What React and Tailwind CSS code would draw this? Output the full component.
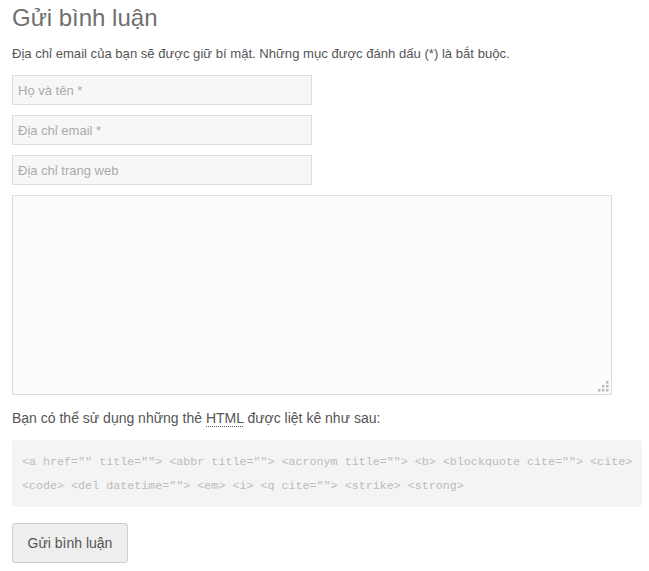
import React from "react";

const inputCls =
  "block w-[300px] h-[30px] border border-[#dddddd] bg-[#f7f7f7] px-[5px] text-[13px] text-[#555] placeholder:text-[#aaa] outline-none";

function ResizeGrip() {
  const dots = [
    [8, 0],
    [4, 4],
    [8, 4],
    [0, 8],
    [4, 8],
    [8, 8],
  ];
  return (
    <svg className="pointer-events-none absolute bottom-[3px] right-[3px]" width="11" height="11" viewBox="0 0 11 11">
      {dots.map(([x, y], i) => (
        <rect key={i} x={x} y={y} width="2.5" height="2.5" fill="#bbb" />
      ))}
    </svg>
  );
}

export default function App() {
  return (
    <div className="min-h-[571px] bg-white px-3 pt-[4px] font-['Liberation_Sans',Arial,sans-serif] text-[#555]">
      <h3 className="text-[24px] leading-[28px] text-[#6f6f6f]">Gửi bình luận</h3>
      <p className="mt-[13px] text-[13.1px] leading-[18px] text-[#555]">
        Địa chỉ email của bạn sẽ được giữ bí mật. Những mục được đánh dấu (*) là bắt buộc.
      </p>

      <form className="mt-[12px]" onSubmit={(e) => e.preventDefault()}>
        <div className="space-y-[10px]">
          <input className={inputCls} placeholder="Họ và tên *" />
          <input className={inputCls} placeholder="Địa chỉ email *" />
          <input className={inputCls} placeholder="Địa chỉ trang web" />
          <div className="relative w-[600px]">
            <textarea className="block w-[600px] h-[200px] resize-none border border-[#dddddd] bg-[#fbfbfb] p-[5px] text-[13px] outline-none" />
            <ResizeGrip />
          </div>
        </div>

        <p className="mt-[13px] text-[14px] leading-[20px] text-[#555]">
          Bạn có thể sử dụng những thẻ{" "}
          <abbr title="HyperText Markup Language" className="no-underline border-b border-dotted border-[#555]">
            HTML
          </abbr>{" "}
          được liệt kê như sau:
        </p>

        <div className="mt-[12px] w-[630px] rounded-[4px] bg-[#f4f4f4] px-[10px] pt-[10px] pb-[9px] font-['Liberation_Mono',monospace] text-[11.7px] leading-[24px] text-[#bbb]">
          <div className="whitespace-nowrap">
            {'<a href="" title=""> <abbr title=""> <acronym title=""> <b> <blockquote cite=""> <cite>'}
          </div>
          <div className="whitespace-nowrap">
            {'<code> <del datetime=""> <em> <i> <q cite=""> <strike> <strong>'}
          </div>
        </div>

        <button
          type="submit"
          className="mt-[16px] block h-[40px] rounded-[3px] border border-[#cccccc] bg-[#eeeeee] px-[14.5px] text-[14px] leading-[38px] text-[#555]"
        >
          Gửi bình luận
        </button>
      </form>
    </div>
  );
}
